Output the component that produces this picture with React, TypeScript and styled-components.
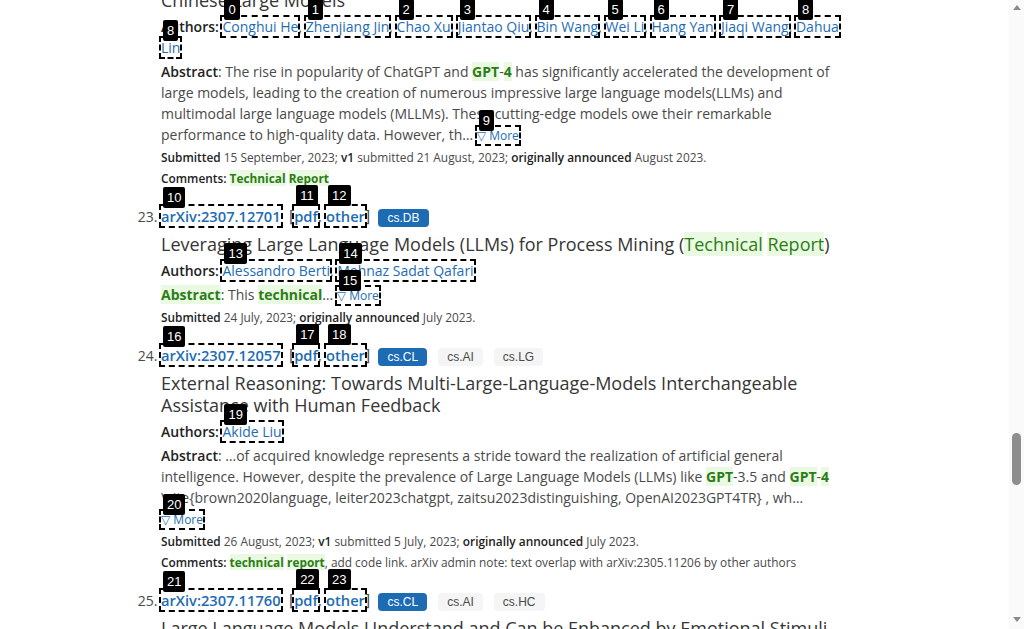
import React, { useLayoutEffect, useRef } from "react";
import styled, { createGlobalStyle, css } from "styled-components";

const LINK = "#1e6cb4";
const TEXT = "#4a4a4a";
const TITLE = "#363636";
const STRONG = "#222222";
const HIT_FG = "#2c7d17";
const HIT_BG = "#eafae2";

const GlobalStyle = createGlobalStyle`
  html, body { margin: 0; padding: 0; background: #ffffff; height: 100%; overflow: hidden; }
  body { font-family: "Open Sans", "Noto Sans", "DejaVu Sans", sans-serif; color: ${TEXT}; }
  #root { height: 100%; }
`;

const Screen = styled.div`
  display: flex;
  height: 100vh;
  width: 100vw;
  overflow: hidden;
`;

const Viewport = styled.main`
  flex: 1 1 auto;
  min-width: 0;
  height: 100%;
  overflow: hidden;
`;

const ResultList = styled.ol`
  margin: 0;
  padding: 0 0 0 161px;
  width: 842px;
  box-sizing: border-box;
  font-size: 14px;
  line-height: 21px;
  color: ${TEXT};
`;

const ResultItem = styled.li`
  margin: 0 0 17px;
  &::marker {
    color: ${TEXT};
  }
`;

const boxed = css`
  outline: 2px dashed #000;
`;

const MetaRow = styled.div`
  height: 22px;
  line-height: 21px;
  white-space: nowrap;
`;

const IdLink = styled.a<{ $boxed?: boolean }>`
  color: ${LINK};
  font-size: 14.7px;
  font-weight: 600;
  text-decoration: none;
  ${(p) => p.$boxed && boxed}
`;

const Files = styled.span`
  color: ${TEXT};
  font-size: 16px;
`;

const Tags = styled.span`
  display: inline-block;
`;

const Tag = styled.span<{ $primary?: boolean }>`
  display: inline-block;
  height: 18px;
  line-height: 18px;
  padding: 0 9px;
  margin-right: 11px;
  border-radius: 4px;
  font-family: "Liberation Sans", Arial, sans-serif;
  font-size: 12px;
  background: ${(p) => (p.$primary ? "#1c6bb3" : "#f5f5f5")};
  color: ${(p) => (p.$primary ? "#ffffff" : "#4a4a4a")};
`;

const Title = styled.p`
  margin: 5px 0 0;
  font-size: 18px;
  line-height: 22px;
  font-weight: 400;
  color: ${TITLE};
`;

const Authors = styled.p`
  margin: 5px 0 0;
`;

const Abstract = styled.p`
  margin: 3px 0 0;
`;

const Fine = styled.p<{ $gap?: boolean }>`
  margin: ${(p) => (p.$gap ? "2px" : "0")} 0 0;
  font-size: 11.87px;
  line-height: 21px;
`;

const Label = styled.span`
  font-weight: 600;
  color: ${STRONG};
`;

const AuthorLink = styled.a<{ $boxed?: boolean }>`
  color: ${LINK};
  text-decoration: none;
  ${(p) => p.$boxed && boxed}
`;

const Small = styled.span`
  font-size: 12px;
  line-height: 14px;
  white-space: nowrap;
`;

const MoreLink = styled.a<{ $boxed?: boolean }>`
  color: ${LINK};
  text-decoration: none;
  white-space: nowrap;
  ${(p) => p.$boxed && boxed}
`;

const Hit = styled.span<{ $bold?: boolean }>`
  background: ${HIT_BG};
  color: ${HIT_FG};
  font-weight: ${(p) => (p.$bold ? 700 : "inherit")};
`;

const Hotspot = styled.span`
  position: relative;
`;

const Badge = styled.span<{ $lift: number }>`
  position: absolute;
  left: 2px;
  top: ${(p) => -p.$lift}px;
  z-index: 3;
  height: 21px;
  line-height: 21px;
  padding: 0 4px;
  border-radius: 2px;
  background: #000;
  color: #fff;
  font-family: "Liberation Sans", Arial, sans-serif;
  font-size: 13px;
  font-weight: 400;
  white-space: nowrap;
`;

const ScrollRail = styled.div`
  flex: 0 0 15px;
  height: 100%;
  background: #fafafa;
  display: flex;
  flex-direction: column;
`;

const ScrollButton = styled.div<{ $down?: boolean }>`
  flex: 0 0 15px;
  display: flex;
  justify-content: center;
  align-items: ${(p) => (p.$down ? "flex-start" : "center")};
  padding-top: ${(p) => (p.$down ? "3px" : "0")};
  box-sizing: border-box;
  &::before {
    content: "";
    width: 0;
    height: 0;
    border-left: 4.5px solid transparent;
    border-right: 4.5px solid transparent;
    ${(p) =>
      p.$down
        ? "border-top: 5px solid #8b8b8b;"
        : "border-bottom: 5px solid #8b8b8b;"}
  }
`;

const ScrollTrack = styled.div`
  flex: 1 1 auto;
  display: flex;
  justify-content: center;
`;

const ScrollThumb = styled.div<{ $top: number; $size: number }>`
  width: 9px;
  height: ${(p) => p.$size}px;
  margin-top: ${(p) => p.$top}px;
  border-radius: 5px;
  background: #8e8e8e;
`;

function Tagged({
  n,
  lift = 18,
  children,
}: {
  n: number;
  lift?: number;
  children: React.ReactNode;
}) {
  return (
    <Hotspot>
      {children}
      <Badge $lift={lift}>{n}</Badge>
    </Hotspot>
  );
}

function Meta({
  id,
  cats,
  marks,
}: {
  id: string;
  cats: string[];
  marks?: [number, number, number];
}) {
  const wrap = (i: number, node: React.ReactNode) =>
    marks ? (
      <Tagged n={marks[i]} lift={20}>
        {node}
      </Tagged>
    ) : (
      node
    );
  return (
    <MetaRow>
      {wrap(0, <IdLink $boxed={!!marks}>arXiv:{id}</IdLink>)}
      <Files>
        {" "}&nbsp;[{wrap(1, <IdLink $boxed={!!marks}>pdf</IdLink>)},{" "}
        {wrap(2, <IdLink $boxed={!!marks}>other</IdLink>)}]&nbsp;{" "}
      </Files>
      <Tags>
        {cats.map((c, i) => (
          <Tag key={c} $primary={i === 0}>
            {c}
          </Tag>
        ))}
      </Tags>
    </MetaRow>
  );
}

function Author({ n, name }: { n: number; name: string }) {
  return (
    <Tagged n={n}>
      <AuthorLink $boxed>{name}</AuthorLink>
    </Tagged>
  );
}

function More({ n }: { n: number }) {
  return (
    <Small>
      <Tagged n={n} lift={17}>
        <MoreLink $boxed>▽ More</MoreLink>
      </Tagged>
    </Small>
  );
}

export default function App() {
  const viewRef = useRef<HTMLElement>(null);
  useLayoutEffect(() => {
    if (viewRef.current) viewRef.current.scrollTop = 60;
  }, []);

  return (
    <>
      <GlobalStyle />
      <Screen>
        <Viewport ref={viewRef}>
          <ResultList start={22}>
            <ResultItem>
              <Meta id="2308.10755" cats={["cs.CL"]} />
              <Title>
                WanJuan: A Comprehensive Multimodal Dataset for Advancing
                English and Chinese Large Models
              </Title>
              <Authors>
                <Label>Authors:</Label> <Author n={0} name="Conghui He" />,{" "}
                <Author n={1} name="Zhenjiang Jin" />,{" "}
                <Author n={2} name="Chao Xu" />,{" "}
                <Author n={3} name="Jiantao Qiu" />,{" "}
                <Author n={4} name="Bin Wang" />,{" "}
                <Author n={5} name="Wei Li" />,{" "}
                <Author n={6} name="Hang Yan" />,{" "}
                <Author n={7} name="Jiaqi Wang" />,{" "}
                <Author n={8} name="Dahua" /> <Author n={8} name="Lin" />
              </Authors>
              <Abstract>
                <Label>Abstract</Label>: The rise in popularity of ChatGPT and{" "}
                <Hit $bold>GPT</Hit>-<Hit $bold>4</Hit> has significantly
                accelerated the development of large models, leading to the
                creation of numerous impressive large language models(LLMs) and
                multimodal large language models (MLLMs). These cutting-edge
                models owe their remarkable performance to high-quality data.
                However, th… <More n={9} />
              </Abstract>
              <Fine $gap>
                <Label>Submitted</Label> 15 September, 2023;{" "}
                <Label>v1</Label> submitted 21 August, 2023;{" "}
                <Label>originally announced</Label> August 2023.
              </Fine>
              <Fine>
                <Label>Comments:</Label> <Hit $bold>Technical</Hit>{" "}
                <Hit $bold>Report</Hit>
              </Fine>
            </ResultItem>

            <ResultItem>
              <Meta id="2307.12701" cats={["cs.DB"]} marks={[10, 11, 12]} />
              <Title>
                Leveraging Large Language Models (LLMs) for Process Mining (
                <Hit>Technical</Hit> <Hit>Report</Hit>)
              </Title>
              <Authors>
                <Label>Authors:</Label> <Author n={13} name="Alessandro Berti" />,{" "}
                <Author n={14} name="Mehnaz Sadat Qafari" />
              </Authors>
              <Abstract>
                <Hit $bold>Abstract</Hit>: This <Hit $bold>technical</Hit>…{" "}
                <More n={15} />
              </Abstract>
              <Fine $gap>
                <Label>Submitted</Label> 24 July, 2023;{" "}
                <Label>originally announced</Label> July 2023.
              </Fine>
            </ResultItem>

            <ResultItem>
              <Meta
                id="2307.12057"
                cats={["cs.CL", "cs.AI", "cs.LG"]}
                marks={[16, 17, 18]}
              />
              <Title>
                External Reasoning: Towards Multi-Large-Language-Models
                Interchangeable Assistance with Human Feedback
              </Title>
              <Authors>
                <Label>Authors:</Label> <Author n={19} name="Akide Liu" />
              </Authors>
              <Abstract>
                <Label>Abstract</Label>: …of acquired knowledge represents a
                stride toward the realization of artificial general
                intelligence. However, despite the prevalence of Large Language
                Models (LLMs) like <Hit $bold>GPT</Hit>-3.5 and{" "}
                <Hit $bold>GPT</Hit>-<Hit $bold>4</Hit>{" "}
                \cite{"{"}brown2020language, leiter2023chatgpt,
                zaitsu2023distinguishing, OpenAI2023GPT4TR{"}"} , wh…{" "}
                <More n={20} />
              </Abstract>
              <Fine $gap>
                <Label>Submitted</Label> 26 August, 2023;{" "}
                <Label>v1</Label> submitted 5 July, 2023;{" "}
                <Label>originally announced</Label> July 2023.
              </Fine>
              <Fine>
                <Label>Comments:</Label> <Hit $bold>technical</Hit>{" "}
                <Hit $bold>report</Hit>, add code link. arXiv admin note: text
                overlap with arXiv:2305.11206 by other authors
              </Fine>
            </ResultItem>

            <ResultItem>
              <Meta
                id="2307.11760"
                cats={["cs.CL", "cs.AI", "cs.HC"]}
                marks={[21, 22, 23]}
              />
              <Title>
                Large Language Models Understand and Can be Enhanced by
                Emotional Stimuli
              </Title>
              <Authors>
                <Label>Authors:</Label> <AuthorLink>Cheng Li</AuthorLink>,{" "}
                <AuthorLink>Jindong Wang</AuthorLink>,{" "}
                <AuthorLink>Yixuan Zhang</AuthorLink>,{" "}
                <AuthorLink>Kaijie Zhu</AuthorLink>,{" "}
                <AuthorLink>Wenxin Hou</AuthorLink>,{" "}
                <AuthorLink>Jianxun Lian</AuthorLink>,{" "}
                <AuthorLink>Fang Luo</AuthorLink>,{" "}
                <AuthorLink>Qiang Yang</AuthorLink>,{" "}
                <AuthorLink>Xing Xie</AuthorLink>
              </Authors>
            </ResultItem>
          </ResultList>
        </Viewport>
        <ScrollRail>
          <ScrollButton />
          <ScrollTrack>
            <ScrollThumb $top={418} $size={52} />
          </ScrollTrack>
          <ScrollButton $down />
        </ScrollRail>
      </Screen>
    </>
  );
}
